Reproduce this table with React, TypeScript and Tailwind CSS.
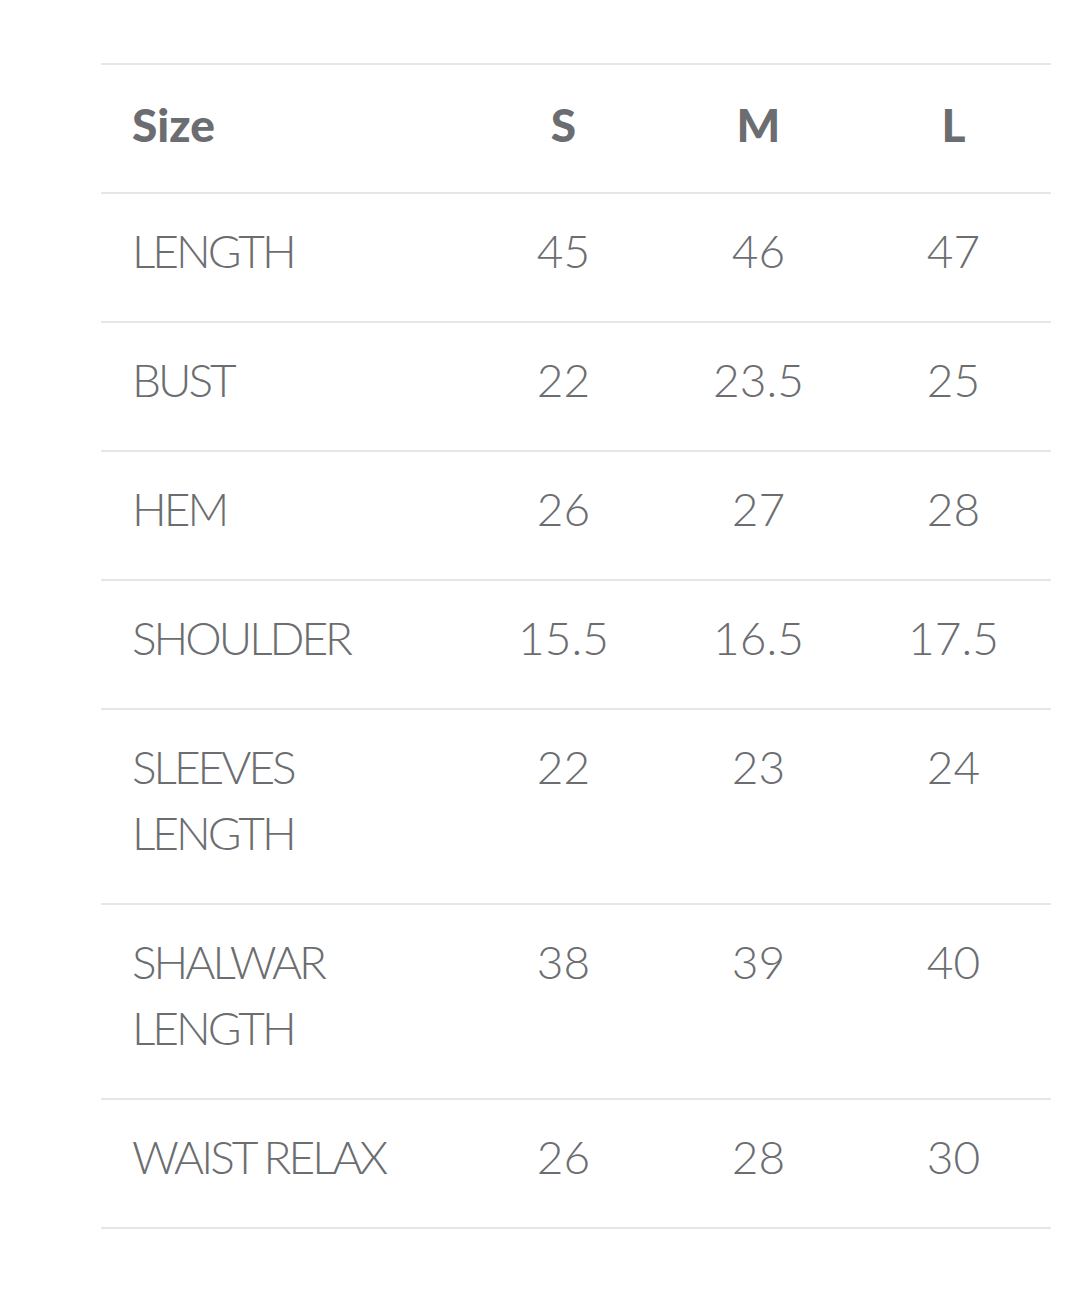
const rows: [string[], string, string, string][] = [
  [["LENGTH"], "45", "46", "47"],
  [["BUST"], "22", "23.5", "25"],
  [["HEM"], "26", "27", "28"],
  [["SHOULDER"], "15.5", "16.5", "17.5"],
  [["SLEEVES", "LENGTH"], "22", "23", "24"],
  [["SHALWAR", "LENGTH"], "38", "39", "40"],
  [["WAIST RELAX"], "26", "28", "30"],
];

export default function App() {
  return (
    <div
      className="w-[1080px] h-[1315px] bg-white pt-[63px] pl-[101px]"
      style={{ fontFamily: "Lato, 'Open Sans', sans-serif" }}
    >
      <div className="w-[950px] border-t-2 border-[#e6e6e6] text-[#6b6d70]">
        <div className="grid grid-cols-[365px_195px_195px_195px] border-b-2 border-[#e6e6e6] text-[46px] leading-[66px] font-black">
          <div className="pl-[31px] pt-[27px] pb-[34px]">Size</div>
          <div className="text-center pt-[27px] pb-[34px]">S</div>
          <div className="text-center pt-[27px] pb-[34px]">M</div>
          <div className="text-center pt-[27px] pb-[34px]">L</div>
        </div>
        {rows.map(([label, s, m, l], i) => (
          <div
            key={i}
            className="grid grid-cols-[365px_195px_195px_195px] border-b-2 border-[#e6e6e6] text-[46px] leading-[66px] font-light"
          >
            <div className="pl-[31px] pt-[24px] pb-[37px] tracking-[-3px]">
              {label.map((t, j) => (
                <div key={j}>{t}</div>
              ))}
            </div>
            <div className="text-center pt-[24px] pb-[37px]">{s}</div>
            <div className="text-center pt-[24px] pb-[37px]">{m}</div>
            <div className="text-center pt-[24px] pb-[37px]">{l}</div>
          </div>
        ))}
      </div>
    </div>
  );
}
